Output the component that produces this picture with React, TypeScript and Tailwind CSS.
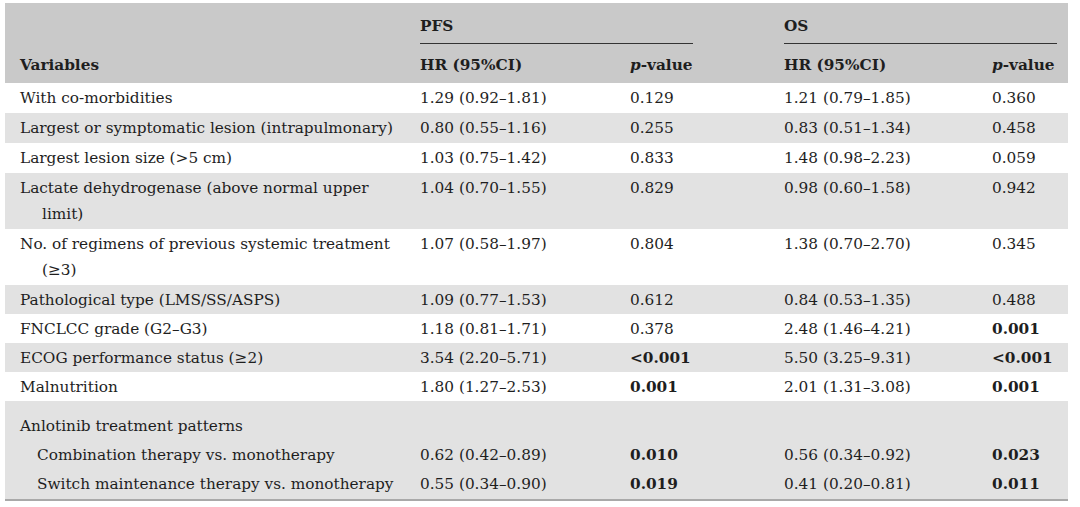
const cols = "grid grid-cols-[415px_210px_154px_208px_1fr]";

type Row = {
  label: string[];
  pfsHr: string;
  pfsP: string;
  pfsBold?: boolean;
  osHr: string;
  osP: string;
  osBold?: boolean;
};

const rows: Row[] = [
  { label: ["With co-morbidities"], pfsHr: "1.29 (0.92–1.81)", pfsP: "0.129", osHr: "1.21 (0.79–1.85)", osP: "0.360" },
  { label: ["Largest or symptomatic lesion (intrapulmonary)"], pfsHr: "0.80 (0.55–1.16)", pfsP: "0.255", osHr: "0.83 (0.51–1.34)", osP: "0.458" },
  { label: ["Largest lesion size (>5 cm)"], pfsHr: "1.03 (0.75–1.42)", pfsP: "0.833", osHr: "1.48 (0.98–2.23)", osP: "0.059" },
  { label: ["Lactate dehydrogenase (above normal upper", "limit)"], pfsHr: "1.04 (0.70–1.55)", pfsP: "0.829", osHr: "0.98 (0.60–1.58)", osP: "0.942" },
  { label: ["No. of regimens of previous systemic treatment", "(≥3)"], pfsHr: "1.07 (0.58–1.97)", pfsP: "0.804", osHr: "1.38 (0.70–2.70)", osP: "0.345" },
  { label: ["Pathological type (LMS/SS/ASPS)"], pfsHr: "1.09 (0.77–1.53)", pfsP: "0.612", osHr: "0.84 (0.53–1.35)", osP: "0.488" },
  { label: ["FNCLCC grade (G2–G3)"], pfsHr: "1.18 (0.81–1.71)", pfsP: "0.378", osHr: "2.48 (1.46–4.21)", osP: "0.001", osBold: true },
  { label: ["ECOG performance status (≥2)"], pfsHr: "3.54 (2.20–5.71)", pfsP: "<0.001", pfsBold: true, osHr: "5.50 (3.25–9.31)", osP: "<0.001", osBold: true },
  { label: ["Malnutrition"], pfsHr: "1.80 (1.27–2.53)", pfsP: "0.001", pfsBold: true, osHr: "2.01 (1.31–3.08)", osP: "0.001", osBold: true },
];

const subRows = [
  { label: "Combination therapy vs. monotherapy", pfsHr: "0.62 (0.42–0.89)", pfsP: "0.010", osHr: "0.56 (0.34–0.92)", osP: "0.023" },
  { label: "Switch maintenance therapy vs. monotherapy", pfsHr: "0.55 (0.34–0.90)", pfsP: "0.019", osHr: "0.41 (0.20–0.81)", osP: "0.011" },
];

const PValue = () => (
  <span className="font-bold">
    <span className="italic">p</span>-value
  </span>
);

export default function App() {
  return (
    <div className="w-[1080px] h-[507px] bg-white pt-[3px] text-[#1e1e1e] text-[15.3px] font-['DejaVu_Serif',serif]">
      <div className="ml-[5px] w-[1063px]">
        {/* header */}
        <div className="bg-[#c9c9c9] h-[80px]">
          <div className={cols + " h-[41px]"}>
            <div />
            <div className="col-span-2 pt-[10px] mr-[91px] border-b border-[#333] font-bold leading-[26px]">PFS</div>
            <div className="col-span-2 pt-[10px] mr-[11px] border-b border-[#333] font-bold leading-[26px]">OS</div>
          </div>
          <div className={cols + " pt-[8px] leading-[26px] font-bold"}>
            <div className="pl-[15px]">Variables</div>
            <div>HR (95%CI)</div>
            <div><PValue /></div>
            <div>HR (95%CI)</div>
            <div><PValue /></div>
          </div>
        </div>

        {/* body */}
        {rows.map((r, i) => (
          <div
            key={i}
            className={
              cols +
              " leading-[26px] " +
              (i % 2 === 1 ? "bg-[#e2e2e2] " : "bg-white ") +
              (i >= 5 ? "pt-[2px] pb-[1px]" : "py-[2px]")
            }
          >
            <div className="pl-[15px]">
              {r.label.map((l, j) => (
                <div key={j} className={j > 0 ? "pl-[22px]" : ""}>{l}</div>
              ))}
            </div>
            <div>{r.pfsHr}</div>
            <div className={r.pfsBold ? "font-bold" : ""}>{r.pfsP}</div>
            <div>{r.osHr}</div>
            <div className={r.osBold ? "font-bold" : ""}>{r.osP}</div>
          </div>
        ))}

        {/* anlotinib group */}
        <div className="bg-[#e2e2e2] pt-[11px] leading-[29px] border-b-2 border-[#a9a9a9]">
          <div className={cols}>
            <div className="pl-[15px]">Anlotinib treatment patterns</div>
          </div>
          {subRows.map((s, i) => (
            <div key={i} className={cols}>
              <div className="pl-[32px]">{s.label}</div>
              <div>{s.pfsHr}</div>
              <div className="font-bold">{s.pfsP}</div>
              <div>{s.osHr}</div>
              <div className="font-bold">{s.osP}</div>
            </div>
          ))}
        </div>
      </div>
    </div>
  );
}
